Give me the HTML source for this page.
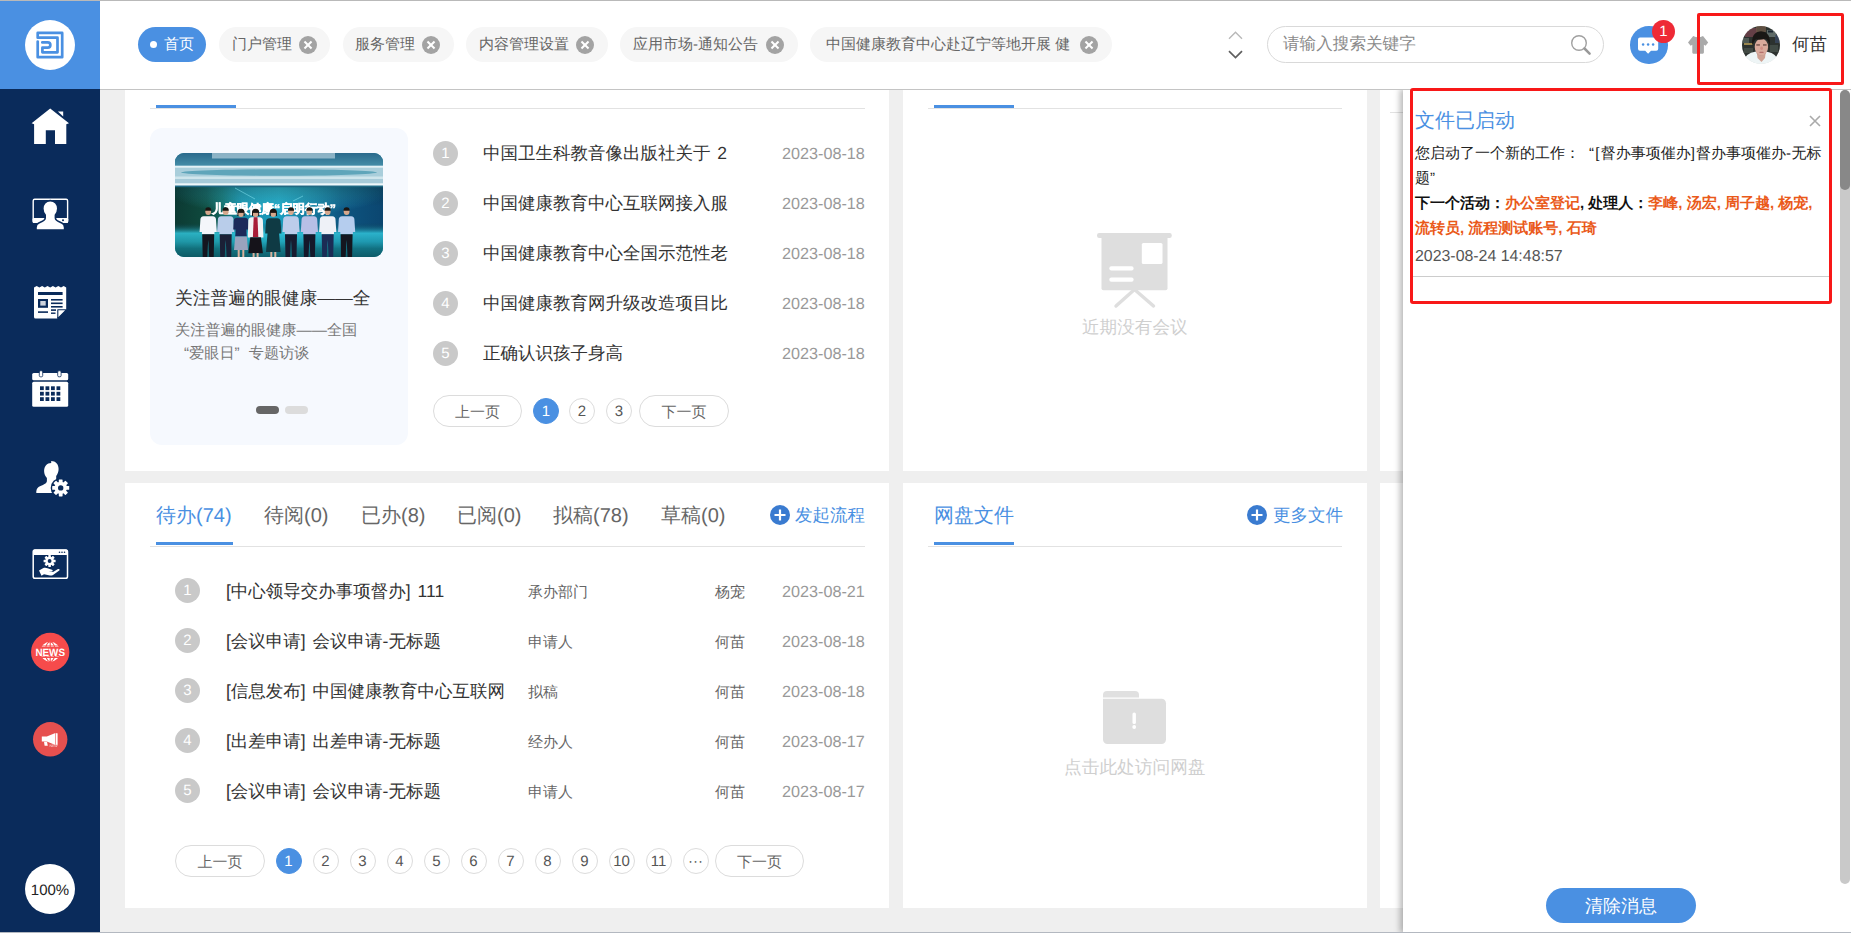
<!DOCTYPE html>
<html lang="zh">
<head>
<meta charset="utf-8">
<title>首页</title>
<style>
*{box-sizing:border-box;margin:0;padding:0}
html,body{text-rendering:geometricPrecision;width:1851px;height:933px;overflow:hidden;background:#efefef;font-family:"Liberation Sans",sans-serif;color:#333}
.abs{position:absolute}
#root{position:relative;width:1851px;height:933px;overflow:hidden;background:#efefef}
.t{position:absolute;white-space:nowrap;line-height:1}
/* sidebar */
#side{left:0;top:0;width:100px;height:933px;background:#0a2b5b}
#logo{left:0;top:0;width:100px;height:89px;background:#4a90e2}
#logo .c{left:25px;top:20px;width:50px;height:50px;border-radius:50%;background:#fff}
/* header */
#head{left:100px;top:0;width:1751px;height:90px;background:#fff;border-bottom:1px solid #c4c4c4}
#topline{left:0;top:0;width:1851px;height:1px;background:#b9b9b9}
.pill{position:absolute;top:27px;height:35px;border-radius:18px;background:#f6f6f6;color:#666;font-size:15px}
.pill .t{top:10px}
.pill.on{background:#4a90e2;color:#fff}
.x{position:absolute;top:9px;width:18px;height:18px;border-radius:50%;background:#a3a3a3}
.x:before,.x:after{content:"";position:absolute;left:4px;top:8px;width:10px;height:2px;background:#fff;transform:rotate(45deg)}
.x:after{transform:rotate(-45deg)}
/* cards */
.card{position:absolute;background:#fff}
.num{position:absolute;width:25px;height:25px;border-radius:50%;background:#c9c9c9;color:#fff;font-size:15px;text-align:center;line-height:25px}
.li{font-size:17.5px;color:#333;word-spacing:2px}
.dt{font-size:16.2px;color:#999}
.pg{position:absolute;height:26px;width:26px;border:1px solid #dcdcdc;border-radius:50%;font-size:15px;color:#555;text-align:center;line-height:26px;background:#fff}
.pg.on{background:#4a90e2;border-color:#4a90e2;color:#fff}
.pgb{position:absolute;height:32px;width:89px;border:1px solid #dcdcdc;border-radius:16px;font-size:15px;color:#666;text-align:center;line-height:33px;background:#fff}
.tab{font-size:20px;color:#666}
.blue{color:#4a90e2}
.sm{font-size:15px;color:#666}
.li,.sm,.dt,.tab,.cap{margin-top:1px}
</style>
</head>
<body>
<div id="root">

<!-- main content cards -->
<div class="card" id="c1" style="left:125px;top:89px;width:764px;height:382px">
  <div class="abs" style="left:25px;top:19px;width:715px;height:1px;background:#e2e2e2"></div>
  <div class="abs" style="left:31px;top:16px;width:80px;height:3px;background:#4a90e2"></div>
  <div class="abs" style="left:25px;top:39px;width:258px;height:317px;border-radius:12px;background:#f6f9fe"></div>
  <div class="abs" id="photo" style="left:50px;top:64px;width:208px;height:104px;border-radius:9px;overflow:hidden;background:#1b7f93">
<svg width="208" height="104" viewBox="0 0 208 104" style="display:block;filter:blur(.550px)">
<defs>
<linearGradient id="pg1" x1="0" x2="1" y1="0" y2="0"><stop offset="0" stop-color="#0c3a33"/><stop offset=".15" stop-color="#0f4a3e"/><stop offset=".23" stop-color="#11665f"/><stop offset=".32" stop-color="#178aa6"/><stop offset=".5" stop-color="#1b9fc0"/><stop offset=".62" stop-color="#167fa3"/><stop offset=".8" stop-color="#0d5580"/><stop offset="1" stop-color="#0b4670"/></linearGradient>
<linearGradient id="pg2" x1="0" x2="0" y1="0" y2="1"><stop offset="0" stop-color="#2a6a8c"/><stop offset="1" stop-color="#4690aa"/></linearGradient>
<linearGradient id="pg3" x1="0" x2="0" y1="0" y2="1"><stop offset="0" stop-color="#0a3d4c" stop-opacity="0"/><stop offset=".3" stop-color="#30c4da" stop-opacity=".85"/><stop offset=".55" stop-color="#22a6ba" stop-opacity=".85"/><stop offset=".75" stop-color="#127583" stop-opacity=".9"/><stop offset="1" stop-color="#0d5c68" stop-opacity=".95"/></linearGradient>
<radialGradient id="pg4" cx=".5" cy=".05" r=".55"><stop offset="0" stop-color="#3ccbe2" stop-opacity=".75"/><stop offset="1" stop-color="#3ccbe2" stop-opacity="0"/></radialGradient>
<linearGradient id="pg5" x1="0" x2="0" y1="0" y2="1"><stop offset="0" stop-color="#06252a" stop-opacity=".35"/><stop offset="1" stop-color="#06252a" stop-opacity="0"/></linearGradient>
</defs>
<rect width="208" height="104" fill="url(#pg1)"/>
<rect y="33" width="208" height="50" fill="url(#pg4)"/>
<rect y="33" width="208" height="20" fill="url(#pg5)"/>
<rect y="70" width="208" height="34" fill="url(#pg3)"/>
<rect width="208" height="14" fill="url(#pg2)"/>
<g>
<rect x="37" y="-1" width="123" height="6.500" fill="#c9e0ea" opacity=".6"/>
<rect y="12.500" width="208" height="20.500" fill="#a9cedb"/>
<rect y="13" width="208" height="1.700" fill="#e2f1f6"/>
<ellipse cx="104" cy="19.500" rx="98" ry="3.200" fill="#5fa5ba"/>
<rect y="23.500" width="208" height="2.500" fill="#cfe5ec"/>
<rect y="26" width="208" height="4" fill="#a7cbd9"/>
<rect y="30.300" width="208" height="2.300" fill="#eef7fa"/>
<rect y="32.600" width="208" height="1.600" fill="#1f6883"/>
<path d="M60 35 L80 46 M118 48 L128 43" stroke="#7fe0ee" stroke-width=".800" opacity=".7"/>
<text x="99" y="60" text-anchor="middle" font-family="Liberation Sans, sans-serif" font-weight="bold" font-size="12.500" fill="#fff" stroke="#fff" stroke-width=".500" textLength="124" lengthAdjust="spacingAndGlyphs">儿童眼健康“启明行动”</text>
<ellipse cx="33.2" cy="58.5" rx="2.900" ry="3.600" fill="#d6a78c"/><path d="M30.1 57.7 a3.100 3.400 0 0 1 6.200 0 z" fill="#1a1512"/><path d="M25.400000000000002 66.500 q0 -3 3.300 -3.300 h9 q3.300 .300 3.300 3.300 l.800 12.500 h-2.300 v2.300 h-12.600 v-2.300 h-2.300 z" fill="#f4f6fa"/><path d="M27.200000000000003 81.300 h12 l-.500 22.700 h-4.500 l-1 -17 l-1 17 h-4.500 z" fill="#14161f"/><ellipse cx="50.7" cy="58.5" rx="2.900" ry="3.600" fill="#d6a78c"/><path d="M47.6 57.7 a3.100 3.400 0 0 1 6.200 0 z" fill="#1a1512"/><path d="M42.900000000000006 66.500 q0 -3 3.300 -3.300 h9 q3.300 .300 3.300 3.300 l.800 12.500 h-2.300 v2.300 h-12.600 v-2.300 h-2.300 z" fill="#b9cdea"/><path d="M44.7 81.300 h12 l-.500 22.700 h-4.500 l-1 -17 l-1 17 h-4.500 z" fill="#1a2036"/><ellipse cx="66" cy="60.5" rx="2.900" ry="3.600" fill="#d6a78c"/><path d="M62.9 59.7 a3.100 3.400 0 0 1 6.200 0 z" fill="#1a1512"/><path d="M62.4 63.0 v-3.500 a3.600 3.800 0 0 1 7.200 0 v3.500 h-1 v-3.600 h-5.200 v3.600z" fill="#1a1512"/><path d="M58.7 68 q0 -3 3.500 -3.300 h7.600 q3.500 .300 3.500 3.300 l.500 8.500 h-2.500 l.500 7 h-11.600 l.500 -7 h-2.500 z" fill="#1c2a5a"/><path d="M60.2 83.500 h11.600 l1.200 13.500 h-14 z" fill="#9aa3bd"/><rect x="62.7" y="97" width="2" height="7" fill="#d9b09a"/><rect x="67.3" y="97" width="2" height="7" fill="#d9b09a"/><ellipse cx="80.6" cy="60.5" rx="2.900" ry="3.600" fill="#d6a78c"/><path d="M77.5 59.7 a3.100 3.400 0 0 1 6.200 0 z" fill="#1a1512"/><path d="M77.0 63.0 v-3.500 a3.600 3.800 0 0 1 7.200 0 v3.500 h-1 v-3.600 h-5.200 v3.600z" fill="#1a1512"/><path d="M73.3 67.500 q0 -3 3.500 -3.300 h7.600 q3.500 .300 3.500 3.300 l.500 17 h-15.600 z" fill="#f2f2f4"/><path d="M78.69999999999999 64.200 h3.800 l.800 19.800 h-5.400 z" fill="#a81d38"/><path d="M75.3 84.300 h10.600 l2 16 h-14.600 z" fill="#15131a"/><rect x="77.6" y="100" width="2" height="4" fill="#d9b09a"/><rect x="81.6" y="100" width="2" height="4" fill="#d9b09a"/><ellipse cx="98.3" cy="60.5" rx="2.900" ry="3.600" fill="#d6a78c"/><path d="M95.2 59.7 a3.100 3.400 0 0 1 6.200 0 z" fill="#1a1512"/><path d="M94.7 63.0 v-3.500 a3.600 3.800 0 0 1 7.200 0 v3.500 h-1 v-3.600 h-5.200 v3.600z" fill="#1a1512"/><path d="M91.0 68.500 q0 -3 3.500 -3.300 h7.600 q3.500 .300 3.500 3.300 l.800 12 h-2.300 l1.500 18.500 h-14.600 l1.500 -18.500 h-2.300 z" fill="#0f3a44"/><rect x="95.3" y="99" width="2" height="5" fill="#d9b09a"/><rect x="99.3" y="99" width="2" height="5" fill="#d9b09a"/><ellipse cx="116" cy="58.5" rx="2.900" ry="3.600" fill="#d6a78c"/><path d="M112.9 57.7 a3.100 3.400 0 0 1 6.200 0 z" fill="#1a1512"/><path d="M108.2 66.500 q0 -3 3.300 -3.300 h9 q3.300 .300 3.300 3.300 l.800 12.500 h-2.300 v2.300 h-12.600 v-2.300 h-2.300 z" fill="#bccdeb"/><path d="M110 81.300 h12 l-.500 22.700 h-4.500 l-1 -17 l-1 17 h-4.500 z" fill="#171c30"/><ellipse cx="134.4" cy="58.5" rx="2.900" ry="3.600" fill="#d6a78c"/><path d="M131.3 57.7 a3.100 3.400 0 0 1 6.200 0 z" fill="#1a1512"/><path d="M126.60000000000001 66.500 q0 -3 3.300 -3.300 h9 q3.300 .300 3.300 3.300 l.800 12.500 h-2.300 v2.300 h-12.600 v-2.300 h-2.300 z" fill="#b7bfe6"/><path d="M128.4 81.300 h12 l-.500 22.700 h-4.500 l-1 -17 l-1 17 h-4.500 z" fill="#15182a"/><ellipse cx="152.7" cy="58.5" rx="2.900" ry="3.600" fill="#d6a78c"/><path d="M149.6 57.7 a3.100 3.400 0 0 1 6.200 0 z" fill="#1a1512"/><path d="M144.89999999999998 66.500 q0 -3 3.300 -3.300 h9 q3.300 .300 3.300 3.300 l.800 12.500 h-2.300 v2.300 h-12.600 v-2.300 h-2.300 z" fill="#eef1f7"/><path d="M146.7 81.300 h12 l-.500 22.700 h-4.500 l-1 -17 l-1 17 h-4.500 z" fill="#1b2c55"/><ellipse cx="171.6" cy="58.5" rx="2.900" ry="3.600" fill="#d6a78c"/><path d="M168.5 57.7 a3.100 3.400 0 0 1 6.200 0 z" fill="#1a1512"/><path d="M163.79999999999998 66.500 q0 -3 3.300 -3.300 h9 q3.300 .300 3.300 3.300 l.800 12.500 h-2.300 v2.300 h-12.600 v-2.300 h-2.300 z" fill="#b5cdee"/><path d="M165.6 81.300 h12 l-.500 22.700 h-4.500 l-1 -17 l-1 17 h-4.500 z" fill="#14161f"/>
</g>
</svg></div>
  <span class="t cap" style="left:50px;top:200px;font-size:17.800px;color:#333">关注普遍的眼健康——全</span>
  <span class="t cap" style="left:50px;top:233px;font-size:15.200px;color:#777">关注普遍的眼健康——全国</span>
  <span class="t cap" style="left:59px;top:256px;font-size:15.200px;color:#777">“爱眼日”<span style="margin-left:9px">专题访谈</span></span>
  <div class="abs" style="left:131px;top:317px;width:23px;height:8px;border-radius:4px;background:#666"></div>
  <div class="abs" style="left:160px;top:317px;width:23px;height:8px;border-radius:4px;background:#dcdcdc"></div>
  <div class="num" style="left:308px;top:52px">1</div><span class="t li" style="left:358px;top:55px">中国卫生科教音像出版社关于 2</span><span class="t dt" style="left:657px;top:56px">2023-08-18</span>
  <div class="num" style="left:308px;top:102px">2</div><span class="t li" style="left:358px;top:105px">中国健康教育中心互联网接入服</span><span class="t dt" style="left:657px;top:106px">2023-08-18</span>
  <div class="num" style="left:308px;top:152px">3</div><span class="t li" style="left:358px;top:155px">中国健康教育中心全国示范性老</span><span class="t dt" style="left:657px;top:156px">2023-08-18</span>
  <div class="num" style="left:308px;top:202px">4</div><span class="t li" style="left:358px;top:205px">中国健康教育网升级改造项目比</span><span class="t dt" style="left:657px;top:206px">2023-08-18</span>
  <div class="num" style="left:308px;top:252px">5</div><span class="t li" style="left:358px;top:255px">正确认识孩子身高</span><span class="t dt" style="left:657px;top:256px">2023-08-18</span>
  <div class="pgb" style="left:308px;top:306px">上一页</div>
  <div class="pg on" style="left:408px;top:309px">1</div>
  <div class="pg" style="left:444px;top:309px">2</div>
  <div class="pg" style="left:481px;top:309px">3</div>
  <div class="pgb" style="left:514px;top:306px;width:90px">下一页</div>
</div>
<div class="card" id="c2" style="left:903px;top:89px;width:464px;height:382px">
  <div class="abs" style="left:25px;top:19px;width:414px;height:1px;background:#e2e2e2"></div>
  <div class="abs" style="left:31px;top:16px;width:80px;height:3px;background:#4a90e2"></div>
  <svg class="abs" style="left:193px;top:142px" width="78" height="80" viewBox="0 0 78 80"><g fill="#dedede"><rect x="1" y="2" width="74.800" height="5" rx="2.200"/><path d="M5.500 6 H71.500 V57.300 a2 2 0 0 1 -2 2 H7.500 a2 2 0 0 1 -2 -2z"/></g><path d="M20 75 L38.500 58.500 L57.500 75" fill="none" stroke="#dedede" stroke-width="3.400" stroke-linecap="round" stroke-linejoin="round"/><rect x="45.800" y="12" width="20.700" height="21" rx="1.600" fill="#fff"/><rect x="13.300" y="35.300" width="24.300" height="4.200" rx="2" fill="#fff"/><rect x="13.300" y="46.500" width="24.300" height="4.200" rx="2" fill="#fff"/></svg>
  <span class="t" style="left:179px;top:230px;font-size:17.600px;color:#cfcfcf">近期没有会议</span>
</div>
<div class="card" id="c3" style="left:125px;top:483px;width:764px;height:425px">
  <div class="abs" style="left:25px;top:63px;width:715px;height:1px;background:#e2e2e2"></div>
  <div class="abs" style="left:31px;top:59px;width:77px;height:3px;background:#4a90e2"></div>
  <span class="t tab blue" style="left:31px;top:22px">待办(74)</span>
  <span class="t tab" style="left:139px;top:22px">待阅(0)</span>
  <span class="t tab" style="left:236px;top:22px">已办(8)</span>
  <span class="t tab" style="left:332px;top:22px">已阅(0)</span>
  <span class="t tab" style="left:428px;top:22px">拟稿(78)</span>
  <span class="t tab" style="left:536px;top:22px">草稿(0)</span>
  <svg class="abs" style="left:644px;top:21px" width="22" height="22" viewBox="0 0 22 22"><circle cx="11" cy="11" r="10" fill="#3a7bd0"/><path d="M11 5.500 V16.500 M5.500 11 H16.500" stroke="#fff" stroke-width="2.200"/></svg>
  <span class="t blue" style="left:670px;top:24px;font-size:17.500px">发起流程</span>
  <div class="num" style="left:50px;top:95px">1</div><span class="t li" style="left:101px;top:99px">[中心领导交办事项督办] 111</span><span class="t sm" style="left:403px;top:101px">承办部门</span><span class="t sm" style="left:590px;top:101px">杨宠</span><span class="t dt" style="left:657px;top:100px">2023-08-21</span>
  <div class="num" style="left:50px;top:145px">2</div><span class="t li" style="left:101px;top:149px">[会议申请] 会议申请-无标题</span><span class="t sm" style="left:403px;top:151px">申请人</span><span class="t sm" style="left:590px;top:151px">何苗</span><span class="t dt" style="left:657px;top:150px">2023-08-18</span>
  <div class="num" style="left:50px;top:195px">3</div><span class="t li" style="left:101px;top:199px">[信息发布] 中国健康教育中心互联网</span><span class="t sm" style="left:403px;top:201px">拟稿</span><span class="t sm" style="left:590px;top:201px">何苗</span><span class="t dt" style="left:657px;top:200px">2023-08-18</span>
  <div class="num" style="left:50px;top:245px">4</div><span class="t li" style="left:101px;top:249px">[出差申请] 出差申请-无标题</span><span class="t sm" style="left:403px;top:251px">经办人</span><span class="t sm" style="left:590px;top:251px">何苗</span><span class="t dt" style="left:657px;top:250px">2023-08-17</span>
  <div class="num" style="left:50px;top:295px">5</div><span class="t li" style="left:101px;top:299px">[会议申请] 会议申请-无标题</span><span class="t sm" style="left:403px;top:301px">申请人</span><span class="t sm" style="left:590px;top:301px">何苗</span><span class="t dt" style="left:657px;top:300px">2023-08-17</span>
  <div class="pgb" style="left:50px;top:362px;width:90px">上一页</div>
  <div class="pg on" style="left:150.5px;top:365px">1</div>
  <div class="pg" style="left:187.5px;top:365px">2</div>
  <div class="pg" style="left:224.5px;top:365px">3</div>
  <div class="pg" style="left:261.5px;top:365px">4</div>
  <div class="pg" style="left:298.5px;top:365px">5</div>
  <div class="pg" style="left:335.5px;top:365px">6</div>
  <div class="pg" style="left:372.5px;top:365px">7</div>
  <div class="pg" style="left:409.5px;top:365px">8</div>
  <div class="pg" style="left:446.5px;top:365px">9</div>
  <div class="pg" style="left:483.5px;top:365px">10</div>
  <div class="pg" style="left:520.5px;top:365px">11</div>
  <div class="pg" style="left:557.5px;top:365px">···</div>
  <div class="pgb" style="left:590px;top:362px;width:89px">下一页</div>
</div>
<div class="card" id="c4" style="left:903px;top:483px;width:464px;height:425px">
  <div class="abs" style="left:25px;top:63px;width:414px;height:1px;background:#e2e2e2"></div>
  <div class="abs" style="left:31px;top:59px;width:80px;height:3px;background:#4a90e2"></div>
  <span class="t tab blue" style="left:31px;top:22px">网盘文件</span>
  <svg class="abs" style="left:343px;top:21px" width="22" height="22" viewBox="0 0 22 22"><circle cx="11" cy="11" r="10" fill="#3a7bd0"/><path d="M11 5.500 V16.500 M5.500 11 H16.500" stroke="#fff" stroke-width="2.200"/></svg>
  <span class="t blue" style="left:370px;top:24px;font-size:17.500px">更多文件</span>
  <svg class="abs" style="left:200px;top:207.700px" width="64" height="56" viewBox="0 0 64 56"><path d="M0 4 a4 4 0 0 1 4 -4 h28 a4 4 0 0 1 4 4 v2.400 h-36z" fill="#e0e0e0"/><path d="M0 7.800 h58.500 a4.500 4.500 0 0 1 4.500 4.500 v36.200 a4.500 4.500 0 0 1 -4.500 4.500 h-54 a4.500 4.500 0 0 1 -4.500 -4.500z" fill="#dedede"/><rect x="29.500" y="21.500" width="3.400" height="11.500" rx="1.600" fill="#fff"/><circle cx="31.200" cy="36" r="1.900" fill="#fff"/></svg>
  <span class="t" style="left:161px;top:276px;font-size:17.700px;color:#cfcfcf">点击此处访问网盘</span>
</div>
<div class="card" id="c5" style="left:1380px;top:89px;width:471px;height:382px"><div class="abs" style="left:10px;top:23px;width:30px;height:1px;background:#e2e2e2"></div></div>
<div class="card" id="c6" style="left:1380px;top:483px;width:471px;height:425px"></div>

<!-- header -->
<div class="abs" id="head">
  <div class="pill on" style="left:38px;width:68px"><i class="abs" style="left:12px;top:14px;width:7px;height:7px;border-radius:50%;background:#fff"></i><span class="t" style="left:26px">首页</span></div>
  <div class="pill" style="left:119px;width:111px"><span class="t" style="left:13px">门户管理</span><i class="x" style="left:80px"></i></div>
  <div class="pill" style="left:243px;width:111px"><span class="t" style="left:12px">服务管理</span><i class="x" style="left:79px"></i></div>
  <div class="pill" style="left:366px;width:142px"><span class="t" style="left:13px">内容管理设置</span><i class="x" style="left:110px"></i></div>
  <div class="pill" style="left:520px;width:178px"><span class="t" style="left:13px">应用市场-通知公告</span><i class="x" style="left:146px"></i></div>
  <div class="pill" style="left:710px;width:302px"><span class="t" style="left:16px">中国健康教育中心赴辽宁等地开展 健</span><i class="x" style="left:270px"></i></div>
  <svg class="abs" style="left:1126px;top:30px" width="20" height="32" viewBox="0 0 20 32"><path d="M3 8.800 L9.500 2.300 L16 8.800" fill="none" stroke="#b8b8b8" stroke-width="1.400"/><path d="M3 21.200 L9.500 27.600 L16 21.200" fill="none" stroke="#5f5f5f" stroke-width="1.700"/></svg>
  <div class="abs" style="left:1167px;top:26px;width:337px;height:37px;border:1px solid #d9d9d9;border-radius:19px;background:#fff"></div>
  <span class="t" style="left:1183px;top:36px;font-size:16.600px;color:#8a8a8a">请输入搜索关键字</span>
  <svg class="abs" style="left:1469px;top:33px" width="24" height="24" viewBox="0 0 24 24"><circle cx="10" cy="10" r="7.300" fill="none" stroke="#a0a0a0" stroke-width="1.400"/><path d="M15.500 15.500 L20.600 20.600" stroke="#999" stroke-width="2.500" stroke-linecap="round"/></svg>
  <div class="abs" style="left:1530px;top:26px;width:37.500px;height:37.500px;border-radius:50%;background:#4a90e2"></div>
  <svg class="abs" style="left:1537px;top:37px" width="24" height="18" viewBox="0 0 24 18"><path d="M3 .500 h16.200 a2 2 0 0 1 2 2 v9.300 a2 2 0 0 1 -2 2 h-5.200 l-2.900 2.900 l-2.900 -2.900 h-5.200 a2 2 0 0 1 -2 -2 v-9.300 a2 2 0 0 1 2 -2z" fill="#fff"/><circle cx="6.100" cy="7.400" r="1.250" fill="#4a90e2"/><circle cx="11.100" cy="7.400" r="1.250" fill="#4a90e2"/><circle cx="16.100" cy="7.400" r="1.250" fill="#4a90e2"/></svg>
  <div class="abs" style="left:1552px;top:20px;width:23px;height:23px;border-radius:50%;background:#ee2a36;color:#fff;font-size:15px;text-align:center;line-height:23px">1</div>
  <svg class="abs" style="left:1588px;top:36px" width="21" height="19" viewBox="0 0 21 19"><path d="M5.200 0 L0 6.600 L2.600 9.800 L4.300 8.800 V16.600 Q4.300 17.700 5.400 17.700 H14.800 Q15.900 17.700 15.900 16.600 V8.800 L17.600 9.800 L20.200 6.600 L15 0 Q10.100 2.600 5.200 0z" fill="#aaa"/></svg>
  <div class="abs" id="avatar" style="left:1642px;top:26px;width:38px;height:38px;border-radius:50%;overflow:hidden;background:#d8dcd9"><svg width="38" height="38" viewBox="0 0 38 38" style="display:block;filter:blur(.700px)"><rect width="38" height="38" fill="#2c322f"/><g><rect x="3" y="2" width="12" height="9" fill="#7a4550" opacity=".7"/><rect x="14" y="0" width="10" height="6" fill="#6b5647" opacity=".8"/><rect x="25" y="4" width="9" height="7" fill="#8a9a98" opacity=".55"/><rect x="26" y="4.500" width="5" height="2" fill="#1a2530"/><rect x="2" y="17" width="9" height="2" fill="#b59a55" opacity=".8"/><rect x="1" y="12" width="6" height="5" fill="#5c6a62" opacity=".7"/><rect x="28" y="19" width="8" height="7" fill="#4a564f" opacity=".7"/><rect x="33" y="9" width="4" height="8" fill="#3a4a66" opacity=".7"/><rect x="2" y="22" width="9" height="5" fill="#4a524b" opacity=".7"/><path d="M0 38 Q3 26.500 14 25.500 L25 25.800 Q35 27 38 38z" fill="#eef5f6"/><path d="M14.500 24 h9.500 l-1 8 l-3.500 4 l-4 -4z" fill="#cfa193"/><path d="M14.500 27.500 q4.500 4 9.300 0 v-3 h-9.300z" fill="#8f7a74" opacity=".55"/><ellipse cx="19.400" cy="21" rx="6.700" ry="8.600" fill="#d9aa9c"/><path d="M10.400 20 Q8.500 6 19 5.300 Q29.500 6 27.600 20 Q26.800 14.500 23.500 12.800 Q17.500 14.500 14 13.300 Q11.500 15 10.400 20z" fill="#191715"/><rect x="14.300" y="18.300" width="3.600" height="1.300" fill="#6a4a44"/><rect x="21" y="18.300" width="3.600" height="1.300" fill="#6a4a44"/><ellipse cx="19.600" cy="22.300" rx="1.400" ry="1.800" fill="#d18f86"/><rect x="17.300" y="25.700" width="4.400" height="1.200" rx=".6" fill="#b4706c"/></g></svg></div>
  <span class="t" style="left:1692px;top:36px;font-size:17.500px;color:#333">何苗</span>
</div>

<!-- sidebar -->
<div class="abs" id="side">
<svg class="abs" style="left:0;top:0" width="100" height="933" viewBox="0 0 100 933">
 <!-- home -->
 <g fill="#fff">
  <path d="M50.2 108.6 L69 123.2 L66.3 124.2 L66.3 144 L55 144 L55 130.2 L45.8 130.2 L45.8 144 L34.1 144 L34.1 124.2 L31.6 123.2 Z"/>
  <path d="M57.9 111.6 H63.2 V116.6 Z"/>
 </g>
 <!-- user screen -->
 <g>
  <rect x="33.2" y="199.2" width="34.4" height="23.2" rx="1.5" fill="none" stroke="#fff" stroke-width="1.4"/>
  <rect x="32.6" y="218" width="35.6" height="5" rx="1.2" fill="#fff"/>
  <circle cx="63" cy="220.3" r="1" fill="#0a2b5b"/>
  <path d="M50.2 200.6 c4.6 0 7.6 3.4 7.6 8 c0 2.6 -1 4.8 -2.4 6.4 v3 c0 2.6 3 3.6 6 4.8 c2 0.8 3.2 2 3.2 4.6 v2.6 h-28.6 v-2.6 c0 -2.6 1.2 -3.8 3.2 -4.6 c3 -1.2 6 -2.2 6 -4.8 v-3 c-1.400 -1.6 -2.4 -3.8 -2.4 -6.400 c0 -4.6 3 -8 7.400 -8z" fill="#fff" stroke="#0a2b5b" stroke-width="1.600"/>
  <rect x="30" y="230" width="40" height="4" fill="#0a2b5b"/>
 </g>
 <!-- news paper -->
 <g>
  <path d="M34 287.500 l2.7 -1.500 l2.700 1.500 l2.700 -1.500 l2.700 1.500 l2.700 -1.500 l2.700 1.500 l2.700 -1.500 l2.700 1.500 l2.700 -1.500 l2.700 1.500 l2.700 -1.500 l2.500 1.500 V309.500 L57.500 318.500 H35.500 Q34 318.500 34 317 Z" fill="#fff"/>
  <path d="M57.800 318.500 V309.800 H66.300 Z" fill="#fff" stroke="#0a2b5b" stroke-width="1.100" stroke-linejoin="round"/><path d="M59 319.500 L67.500 310.500 V320 Z" fill="#0a2b5b"/>
  <rect x="38" y="292" width="24.600" height="3" fill="#0a2b5b"/>
  <rect x="38" y="299" width="10" height="8.800" fill="#0a2b5b"/>
  <rect x="40.300" y="301" width="5.400" height="4.600" fill="#fff" opacity=".8"/>
  <rect x="51" y="299" width="11.600" height="1.600" fill="#0a2b5b"/>
  <rect x="51" y="302.500" width="11.600" height="1.600" fill="#0a2b5b"/>
  <rect x="51" y="306" width="11.600" height="1.600" fill="#0a2b5b"/>
  <rect x="51" y="309.300" width="5" height="1.600" fill="#0a2b5b"/>
  <rect x="38" y="311.300" width="10" height="1.600" fill="#0a2b5b"/>
  <rect x="51" y="312.500" width="4.500" height="1.400" fill="#0a2b5b"/>
 </g>
 <!-- calendar -->
 <g fill="#fff">
  <rect x="32.200" y="373" width="36" height="7.200" rx="1.500"/>
  <rect x="32.200" y="381.800" width="36" height="25" rx="1.500"/>
  <rect x="39.300" y="370.800" width="3.400" height="6" rx="1.200" stroke="#0a2b5b" stroke-width=".8"/>
  <rect x="57.700" y="370.800" width="3.400" height="6" rx="1.200" stroke="#0a2b5b" stroke-width=".8"/>
  <g fill="#0a2b5b">
   <rect x="40" y="386.300" width="3.800" height="3.800"/><rect x="45.500" y="386.300" width="3.800" height="3.800"/><rect x="51" y="386.300" width="3.800" height="3.800"/><rect x="56.500" y="386.300" width="3.800" height="3.800"/>
   <rect x="40" y="391.800" width="3.800" height="3.800"/><rect x="45.500" y="391.800" width="3.800" height="3.800"/><rect x="51" y="391.800" width="3.800" height="3.800"/><rect x="56.500" y="391.800" width="3.800" height="3.800"/>
   <rect x="40" y="397.200" width="3.800" height="3.800"/><rect x="45.500" y="397.200" width="3.800" height="3.800"/><rect x="51" y="397.200" width="3.800" height="3.800"/><rect x="56.500" y="397.200" width="3.800" height="3.800"/>
  </g>
 </g>
 <!-- user gear -->
 <g fill="#fff">
  <path d="M51.200 461 c4.400 0 7.400 3.200 7.400 8 c0 2.800 -1 5.200 -2.400 7 v3 c0 1.600 1.200 2.600 3 3.400 l-2 10.500 h-20.900 c0 -4 1.200 -5.800 4.200 -7 c3.600 -1.400 6.400 -2.600 6.400 -5.200 v-2.600 c-1.600 -1.800 -2.800 -4.200 -2.800 -7 c0 -4.800 2.800 -8.100 7.100 -8.100z"/>
  <circle cx="60.700" cy="487.900" r="10" fill="#0a2b5b"/>
  <g transform="translate(60.700 487.900)">
   <circle r="6.200"/>
   <g id="teeth"><rect x="-1.900" y="-8.500" width="3.800" height="17" rx=".6"/><rect x="-1.900" y="-8.500" width="3.800" height="17" rx=".6" transform="rotate(45)"/><rect x="-1.900" y="-8.500" width="3.800" height="17" rx=".6" transform="rotate(90)"/><rect x="-1.900" y="-8.500" width="3.800" height="17" rx=".6" transform="rotate(135)"/></g>
   <circle r="2.700" fill="#0a2b5b"/>
  </g>
 </g>
 <!-- window gear hand -->
 <g>
  <rect x="33.200" y="550" width="34.300" height="28.300" rx="1.800" fill="none" stroke="#fff" stroke-width="1.500"/>
  <rect x="33" y="549.500" width="34.800" height="5.500" rx="1.500" fill="#fff"/>
  <circle cx="59.500" cy="552.200" r=".8" fill="#0a2b5b"/><circle cx="62" cy="552.200" r=".8" fill="#0a2b5b"/><circle cx="64.500" cy="552.200" r=".8" fill="#0a2b5b"/>
  <g transform="translate(49.600 561)" fill="#fff">
   <circle r="4.300"/>
   <rect x="-1.300" y="-6" width="2.600" height="12" rx=".4"/><rect x="-1.300" y="-6" width="2.600" height="12" rx=".4" transform="rotate(45)"/><rect x="-1.300" y="-6" width="2.600" height="12" rx=".4" transform="rotate(90)"/><rect x="-1.300" y="-6" width="2.600" height="12" rx=".4" transform="rotate(135)"/>
   <circle r="1.900" fill="#0a2b5b"/>
  </g>
  <path d="M39 570.500 l4 -2.300 c1.500 -.8 3 -.6 4.500 0 l4.500 1.600 c1 .4 1 1.500 0 1.700 l-3.500 .3 l4.500 .3 l5 -3 c1.300 -.6 2.200 .6 1.300 1.500 l-6.300 4.400 c-1 .6 -2 .7 -3 .5 l-6 -1.200 l-2.500 1.500 z" fill="#fff"/>
 </g>
 <!-- NEWS -->
 <g>
  <circle cx="50.200" cy="652" r="19.200" fill="#f64b4b"/>
  <circle cx="50.200" cy="651.700" r="10" fill="#fff"/>
  <g stroke="#f64b4b" stroke-width="1.100" fill="none">
   <path d="M50.200 641.500 V662"/><ellipse cx="50.200" cy="651.700" rx="5" ry="10"/><path d="M41 646 H60 M41 657.500 H60"/>
  </g>
  <rect x="33" y="647" width="35" height="9.600" fill="#f64b4b"/>
  <text x="50.200" y="655.600" text-anchor="middle" font-family="Liberation Sans, sans-serif" font-weight="bold" font-size="10.600" fill="#fff" textLength="29.500" lengthAdjust="spacingAndGlyphs">NEWS</text>
 </g>
 <!-- megaphone -->
 <g>
  <circle cx="50.200" cy="739.300" r="17.200" fill="#e6504f"/>
  <path d="M41.800 736.600 h5 l8.600 -3.600 v12 l-8.600 -3.600 h-5 z" fill="#fff"/>
  <rect x="56" y="733" width="1.600" height="12" rx=".8" fill="#fff"/>
  <path d="M44 741.800 h3 l.8 4 h-3.200 z" fill="#fff"/>
  <text x="49.500" y="747.300" font-family="Liberation Sans, sans-serif" font-size="3.500" fill="#fff" opacity=".8">NEW</text>
 </g>
 <!-- 100% -->
 <circle cx="50" cy="889" r="25" fill="#fff"/>
 <text x="50" y="894.500" text-anchor="middle" font-family="Liberation Sans, sans-serif" font-size="15" fill="#222">100%</text>
</svg>
</div>
<div class="abs" id="logo"><div class="abs c"></div>
<svg class="abs" style="left:36px;top:31px" width="28" height="28" viewBox="0 0 28 28"><path d="M6.300 11.400 H11.700 A2.650 2.650 0 0 1 11.700 16.700 H6.400 V21.300 H21.500 V6.700 H1.700 V1.900 H26.200 V26.200 H1.700 V10.600" fill="none" stroke="#4a90e2" stroke-width="2.700" stroke-linejoin="round" stroke-linecap="round"/></svg>
</div>
<div class="abs" id="topline"></div>

<!-- message panel -->
<div class="abs" style="left:1370px;top:90px;width:481px;height:843px;overflow:hidden"><div class="abs" id="msg" style="left:33px;top:-1px;width:448px;height:844px;background:#fff;box-shadow:-3px 0 6px rgba(0,0,0,.28)">
  <span class="t" style="left:12px;top:22px;font-size:20px;color:#4a90e2">文件已启动</span>
  <svg class="abs" style="left:406px;top:26px" width="12" height="12" viewBox="0 0 12 12"><path d="M1 1 L11 11 M11 1 L1 11" stroke="#aaa" stroke-width="1.600"/></svg>
  <div class="abs" style="left:12px;top:52px;width:416px;font-size:15px;line-height:25px;color:#222;word-break:break-all">您启动了一个新的工作：<span style="margin-left:9px;letter-spacing:1.300px">“[</span>督办事项催办<span style="letter-spacing:1px">]</span>督办事项催办<span style="letter-spacing:.600px">-</span>无标题”</div>
  <div class="abs" style="left:12px;top:102px;width:416px;font-size:15px;line-height:25px;color:#111;font-weight:bold"><span>下一个活动：</span><span style="color:#ea5a1a">办公室登记</span><span>, 处理人：</span><span style="color:#ea5a1a">李峰, 汤宏, 周子越, 杨宠, 流转员, 流程测试账号, 石琦</span></div>
  <span class="t" style="left:12px;top:160px;font-size:15.900px;color:#555">2023-08-24 14:48:57</span>
  <div class="abs" style="left:7px;top:187px;width:422px;height:1px;background:#ccc"></div>
  <div class="abs" style="left:143px;top:799px;width:150px;height:35px;border-radius:18px;background:#4a90e2;color:#fff;font-size:18px;text-align:center;line-height:37px">清除消息</div>
  <div class="abs" style="left:437px;top:1px;width:10px;height:794px;border-radius:5px;background:#c9c9c9"></div>
  <div class="abs" style="left:437px;top:1px;width:10px;height:100px;border-radius:5px;background:#888"></div>
</div></div>
<!-- red annotation rectangles -->
<div class="abs" style="left:1697px;top:13px;width:147px;height:72px;border:3px solid #f81818;border-radius:2px"></div>
<div class="abs" style="left:1410px;top:88px;width:422px;height:216px;border:3px solid #f81818;border-radius:3px"></div>

<div class="abs" style="left:0;top:932px;width:1851px;height:1px;background:#b3b8c0"></div>
</div>
</body>
</html>
